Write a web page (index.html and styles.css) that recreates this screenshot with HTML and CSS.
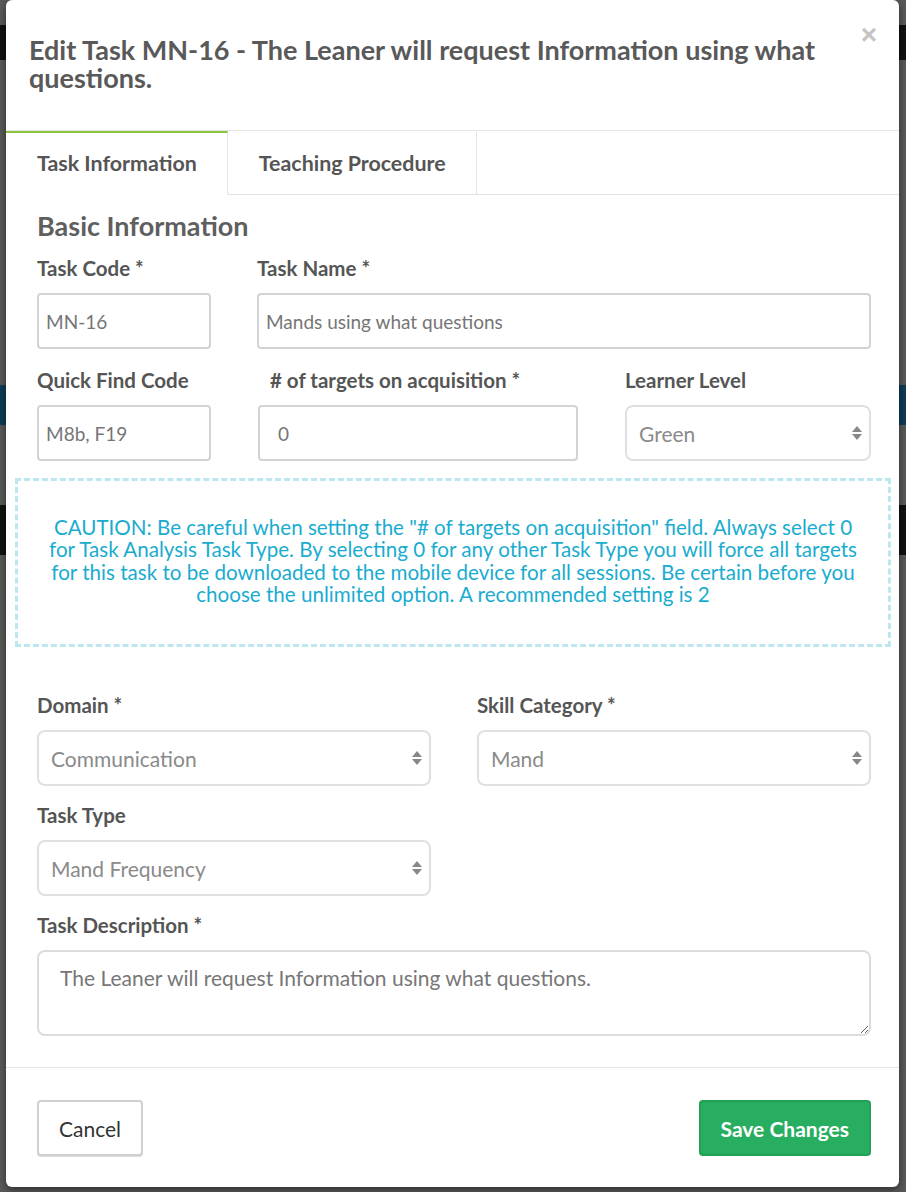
FILE: index.html
```html
<!DOCTYPE html>
<html lang="en">
<head>
    <meta charset="UTF-8">
    <meta name="viewport" content="width=device-width, initial-scale=1.0">
    <title>Edit Task MN-16</title>
    <link rel="stylesheet" href="styles.css">
</head>
<body>
    <div class="modal">
        <div class="modal-header">
            <h4 class="modal-title">Edit Task MN-16 - The Leaner will request Information using what questions.</h4>
            <button class="close" type="button">&times;</button>
        </div>
        <ul class="tabs">
            <li class="tab active">Task Information</li>
            <li class="tab">Teaching Procedure</li>
        </ul>
        <div class="modal-body">
            <h3 class="section-title">Basic Information</h3>
            <div class="row row-code">
                <div class="field"><label>Task Code *</label><input class="input" type="text" value="MN-16"></div>
                <div class="field"><label>Task Name *</label><input class="input" type="text" value="Mands using what questions"></div>
            </div>
            <div class="row row-find">
                <div class="field"><label>Quick Find Code</label><input class="input" type="text" value="M8b, F19"></div>
                <div class="field field-targets"><label># of targets on acquisition *</label><input class="input input-number" type="text" value="0"></div>
                <div class="field"><label>Learner Level</label>
                    <div class="select"><select><option>Green</option></select></div>
                </div>
            </div>
            <div class="caution">
                CAUTION: Be careful when setting the "# of targets on acquisition" field. Always select 0 for Task Analysis Task Type. By selecting 0 for any other Task Type you will force all targets for this task to be downloaded to the mobile device for all sessions. Be certain before you choose the unlimited option. A recommended setting is 2
            </div>
            <div class="row row-half">
                <div class="field"><label>Domain *</label>
                    <div class="select"><select><option>Communication</option></select></div>
                </div>
                <div class="field"><label>Skill Category *</label>
                    <div class="select"><select><option>Mand</option></select></div>
                </div>
                <div class="field"><label>Task Type</label>
                    <div class="select"><select><option>Mand Frequency</option></select></div>
                </div>
            </div>
            <div class="field"><label>Task Description *</label>
                <textarea class="textarea">The Leaner will request Information using what questions.</textarea>
            </div>
        </div>
        <div class="modal-footer">
            <button class="btn btn-default" type="button">Cancel</button>
            <button class="btn btn-success" type="button">Save Changes</button>
        </div>
    </div>
</body>
</html>
```

FILE: styles.css
```css
body {
    margin: 0;
    padding: 0 0 0 6px;
    font-family: Lato, "Open Sans", sans-serif;
    color: #555;
    min-height: 1192px;
    box-sizing: border-box;
    background: linear-gradient(to bottom,
        #5a5a5a 0, #5a5a5a 25px,
        #111 25px, #111 60px,
        #5a5a5a 60px, #5a5a5a 385px,
        #0f3d57 385px, #0f3d57 425px,
        #5a5a5a 425px, #5a5a5a 505px,
        #111 505px, #111 555px,
        #5a5a5a 555px);
}

.modal {
    width: 893px;
    background: #fff;
    border-radius: 6px;
    box-shadow: 0 3px 9px rgba(0, 0, 0, 0.5);
}

.modal-header {
    display: flex;
    align-items: flex-start;
    padding: 36px 22px 38px 23px;
    border-bottom: 1px solid #e5e5e5;
}

.modal-title {
    flex: 1;
    margin: 0;
    font-size: 27px;
    line-height: 28px;
    font-weight: 700;
    color: #595959;
}

.close {
    border: 0;
    background: none;
    padding: 0;
    margin: -15px 0 0 30px;
    font-family: Arial, sans-serif;
    font-size: 28px;
    font-weight: 700;
    line-height: 1;
    color: #c4c4c4;
}

.tabs {
    display: flex;
    list-style: none;
    margin: 0;
    padding: 0;
    border-bottom: 1px solid #e2e2e2;
}

.tab {
    padding: 0 30px 0 31px;
    height: 61px;
    line-height: 61px;
    font-size: 21.4px;
    font-weight: 700;
    color: #555;
    border-top: 2px solid transparent;
    border-right: 1px solid #e2e2e2;
    margin-bottom: -1px;
    border-bottom: 1px solid #e2e2e2;
}

.tab.active {
    border-top-color: #8cc63f;
    border-bottom-color: #fff;
}

.modal-body {
    padding: 15px 28px 13px 31px;
}

.section-title {
    margin: 0 0 13px;
    font-size: 27px;
    line-height: 32px;
    font-weight: 700;
    color: #5f5f5f;
}

.row {
    display: grid;
    column-gap: 46px;
}

.row-code {
    grid-template-columns: 174px 1fr;
}

.row-find {
    grid-template-columns: 174px 320px 1fr;
    column-gap: 47px;
}

.row-half {
    grid-template-columns: 1fr 1fr;
}

.field {
    margin-bottom: 18px;
}

.field label {
    display: block;
    font-size: 20.5px;
    font-weight: 700;
    line-height: 26px;
    color: #555;
    margin-bottom: 12px;
}

.field-targets label {
    padding-left: 12px;
}

.row-find .field {
    margin-bottom: 17px;
}

.row-half .field {
    margin-bottom: 16px;
}

.input {
    box-sizing: border-box;
    width: 100%;
    height: 56px;
    padding: 0 7px;
    border: 2px solid #d3d3d3;
    border-radius: 4px;
    font-family: inherit;
    font-size: 19px;
    color: #767676;
}

.input-number {
    padding-left: 18px;
}

.select {
    position: relative;
}

.select select {
    box-sizing: border-box;
    width: 100%;
    height: 56px;
    padding: 0 12px;
    border: 2px solid #e0e0e0;
    border-radius: 8px;
    background: #fff;
    appearance: none;
    font-family: inherit;
    font-size: 21px;
    color: #8a8a8a;
}

.select::before,
.select::after {
    content: "";
    position: absolute;
    right: 9px;
    border-left: 5px solid transparent;
    border-right: 5px solid transparent;
}

.select::before {
    top: 21px;
    border-bottom: 6px solid #888;
}

.select::after {
    top: 29px;
    border-top: 6px solid #888;
}

.caution {
    margin: 0 -20px 45px -22px;
    padding: 35px 24px 39px;
    border: 3px dashed #bde7ef;
    text-align: center;
    font-size: 20.6px;
    line-height: 22.3px;
    color: #19accf;
}

.textarea {
    box-sizing: border-box;
    display: block;
    width: 100%;
    height: 86px;
    padding: 13px 21px;
    border: 2px solid #dcdcdc;
    border-radius: 8px;
    font-family: inherit;
    font-size: 21px;
    color: #777;
}

.modal-footer {
    display: flex;
    justify-content: space-between;
    padding: 32px 28px 31px 31px;
    border-top: 1px solid #e5e5e5;
}

.btn {
    height: 56px;
    padding: 0 20px;
    border-radius: 4px;
    font-family: inherit;
    font-size: 21px;
}

.btn-default {
    background: #fff;
    color: #333;
    border: 2px solid #d0d0d0;
    box-shadow: 0 1px 0 #ddd;
}

.btn-success {
    background: #28ae60;
    color: #fff;
    font-weight: 700;
    border: 2px solid #22a055;
}
```
